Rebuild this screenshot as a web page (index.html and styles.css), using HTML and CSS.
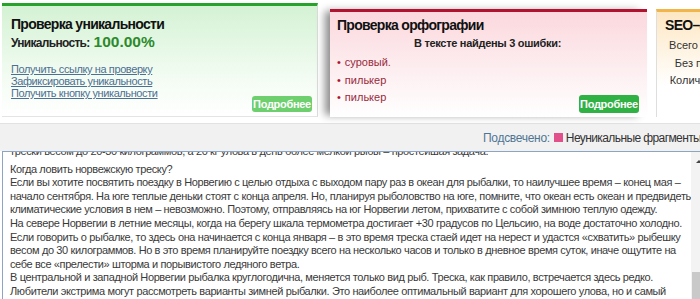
FILE: index.html
```html
<!DOCTYPE html>
<html lang="ru">
<head>
<meta charset="utf-8">
<link rel="stylesheet" href="styles.css">
</head>
<body>
<div class="page">
  <div class="cards">
    <div class="card card-uniq">
      <div class="card-title">Проверка уникальности</div>
      <div class="uniq-line"><span class="uniq-label">Уникальность:</span> <span class="uniq-value">100.00%</span></div>
      <div class="links">
        <a href="#">Получить ссылку на проверку</a>
        <a href="#">Зафиксировать уникальность</a>
        <a href="#">Получить кнопку уникальности</a>
      </div>
      <span class="btn btn-light">Подробнее</span>
    </div>
    <div class="card card-spell">
      <div class="card-title">Проверка орфографии</div>
      <div class="spell-sub">В тексте найдены 3 ошибки:</div>
      <ul class="errors">
        <li>суровый.</li>
        <li>пилькер</li>
        <li>пилькер</li>
      </ul>
      <span class="btn btn-dark">Подробнее</span>
    </div>
    <div class="card card-seo">
      <div class="card-title">SEO–анализ</div>
      <div class="seo-lines">
        <div>Всего символов: 2680</div>
        <div>Без пробелов: 2250</div>
        <div>Количество слов: 412</div>
      </div>
    </div>
  </div>
  <div class="legend">
    <span class="legend-label">Подсвечено:</span>
    <span class="swatch"></span>
    <span class="legend-text">Неуникальные фрагменты</span>
  </div>
  <div class="textbox">
    <div class="text">
      <div class="cut">трески весом до 20-30 килограммов, а 20 кг улова в день более мелкой рыбы – простейшая задача.</div>
      <div>Когда ловить норвежскую треску?</div>
      <div>Если вы хотите посвятить поездку в Норвегию с целью отдыха с выходом пару раз в океан для рыбалки, то наилучшее время – конец мая –</div>
      <div>начало сентября. На юге теплые деньки стоят с конца апреля. Но, планируя рыболовство на юге, помните, что океан есть океан и предвидеть</div>
      <div>климатические условия в нем – невозможно. Поэтому, отправляясь на юг Норвегии летом, прихватите с собой зимнюю теплую одежду.</div>
      <div>На севере Норвегии в летние месяцы, когда на берегу шкала термометра достигает +30 градусов по Цельсию, на воде достаточно холодно.</div>
      <div>Если говорить о рыбалке, то здесь она начинается с конца января – в это время треска стаей идет на нерест и удастся «схватить» рыбешку</div>
      <div>весом до 30 килограммов. Но в это время планируйте поездку всего на несколько часов и только в дневное время суток, иначе ощутите на</div>
      <div>себе все «прелести» шторма и порывистого ледяного ветра.</div>
      <div>В центральной и западной Норвегии рыбалка круглогодична, меняется только вид рыб. Треска, как правило, встречается здесь редко.</div>
      <div>Любители экстрима могут рассмотреть варианты зимней рыбалки. Это наиболее оптимальный вариант для хорошего улова, но и самый</div>
    </div>
    <div class="scrollbar">
      <span class="arrow"></span>
      <span class="thumb"></span>
    </div>
  </div>
</div>
</body>
</html>
```
FILE: styles.css
```css
html, body {
  margin: 0;
  padding: 0;
  background: #fff;
}
.page {
  width: 700px;
  height: 299px;
  overflow: hidden;
  font-family: "Liberation Sans", Arial, sans-serif;
  color: #333;
}
.cards {
  display: flex;
  align-items: flex-start;
  height: 124px;
  padding-left: 2px;
  border-bottom: 1px solid #e2e2e2;
  box-sizing: border-box;
}
.card {
  position: relative;
  flex: none;
  box-sizing: border-box;
  padding: 0 9px;
}
.card-title {
  font-weight: bold;
  font-size: 14px;
  letter-spacing: -0.7px;
  color: #111;
  line-height: 16px;
}
.card-uniq {
  width: 316px;
  height: 114px;
  margin-top: 3px;
  border-top: 3px solid #27a32b;
  border-right: 1px solid #dcdcdc;
  border-bottom: 1px solid #e4e4e4;
  background: linear-gradient(#d4f2d4, #f3fcf3 65%, #fff);
  padding-top: 10px;
}
.uniq-line {
  margin-top: 1px;
  display: flex;
  align-items: baseline;
  gap: 4px;
}
.uniq-label {
  font-weight: bold;
  font-size: 12px;
  letter-spacing: -0.7px;
  color: #222;
}
.uniq-value {
  font-weight: bold;
  font-size: 15.5px;
  color: #2b8a2b;
}
.links {
  margin-top: 12px;
  display: flex;
  flex-direction: column;
}
.links a {
  font-size: 11px;
  line-height: 12px;
  letter-spacing: -0.4px;
  color: #4d6f92;
  text-decoration: underline;
}
.btn {
  position: absolute;
  right: 5px;
  bottom: 4px;
  width: 60px;
  height: 16px;
  border-radius: 3px;
  color: #fff;
  font-weight: bold;
  font-size: 11px;
  letter-spacing: -0.3px;
  line-height: 16px;
  text-align: center;
}
.btn-light {
  background: #6dcf6d;
}
.btn-dark {
  background: #2fb144;
  height: 18px;
  line-height: 18px;
  right: 8px;
  bottom: 4px;
}
.card-spell {
  width: 317px;
  height: 108px;
  margin-top: 9px;
  margin-left: 12px;
  border-top: 3px solid #b3122f;
  background: linear-gradient(#fbd8dd, #fdf0f2 60%, #fff);
  box-shadow: -7px 0 8px -2px rgba(0,0,0,0.45);
  padding-top: 5px;
  padding-left: 7px;
}
.spell-sub {
  text-align: center;
  font-weight: bold;
  font-size: 11px;
  letter-spacing: -0.3px;
  color: #222;
  margin-top: 4px;
}
.errors {
  list-style: none;
  margin: 5px 0 0;
  padding: 0;
}
.errors li {
  font-size: 11px;
  line-height: 17.5px;
  color: #9a2a3c;
}
.errors li::before {
  content: "•";
  margin-right: 4px;
  color: #b3122f;
}
.card-seo {
  width: 150px;
  height: 108px;
  margin-top: 9px;
  margin-left: 9px;
  border-top: 3px solid #f1b54a;
  border-left: 1px solid #dedede;
  background: linear-gradient(#fde7c3, #fff 70%);
  padding-top: 5px;
  padding-left: 8px;
}
.seo-lines {
  margin-top: 4px;
  font-size: 11px;
  line-height: 17.5px;
  color: #333;
  text-align: center;
  width: 120px;
  white-space: nowrap;
}
.legend {
  height: 27px;
  background: #f1f1f1;
  display: flex;
  align-items: center;
  padding-left: 483px;
  white-space: nowrap;
  font-size: 12px;
  letter-spacing: -0.3px;
  box-sizing: border-box;
}
.legend-label {
  color: #4f7594;
}
.swatch {
  width: 9px;
  height: 9px;
  background: #e2508c;
  margin: 0 3px 0 4px;
  flex: none;
}
.legend-text {
  color: #333;
  letter-spacing: -0.6px;
}
.textbox {
  display: flex;
  height: 150px;
  margin-left: 2px;
  width: 710px;
  border: 1px solid #8ba5c2;
  overflow: hidden;
  background: #fff;
}
.text {
  flex: 1;
  padding-left: 7px;
  margin-top: -3px;
  font-size: 11px;
  line-height: 13.6px;
  letter-spacing: -0.38px;
  color: #3a3a3a;
  white-space: nowrap;
  overflow: hidden;
}
.text .cut {
  margin-top: -4px;
  margin-bottom: 4px;
}
.scrollbar {
  flex: none;
  width: 17px;
  margin-right: 5px;
  background: #f3f3f3;
  display: flex;
  flex-direction: column;
  align-items: flex-start;
  justify-content: space-between;
}
.arrow {
  margin: 8px 0 0 5px;
  width: 0;
  height: 0;
  border-left: 3px solid transparent;
  border-right: 3px solid transparent;
  border-bottom: 3px solid #444;
}
.thumb {
  width: 15px;
  height: 30px;
  background: #c9c9c9;
  margin-left: 1px;
}
```
